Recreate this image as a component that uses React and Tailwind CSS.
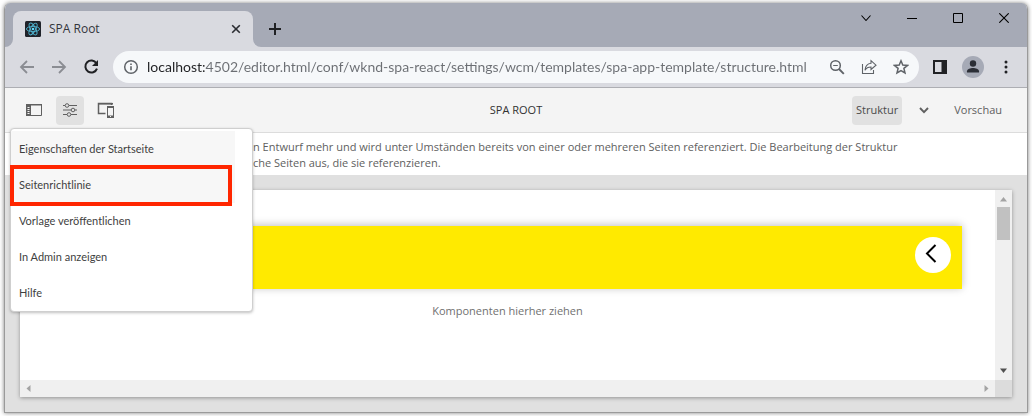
import React from "react";

function ReactLogo() {
  return (
    <svg viewBox="0 0 16 16" className="h-4 w-4 shrink-0" aria-hidden="true">
      <rect width="16" height="16" rx="1.5" fill="#20232a" />
      <g fill="none" stroke="#4fb3cf" strokeWidth="0.9">
        <ellipse cx="8" cy="8" rx="6.6" ry="2.6" />
        <ellipse cx="8" cy="8" rx="6.6" ry="2.6" transform="rotate(60 8 8)" />
        <ellipse cx="8" cy="8" rx="6.6" ry="2.6" transform="rotate(120 8 8)" />
      </g>
      <circle cx="8" cy="8" r="1.3" fill="#61dafb" />
    </svg>
  );
}

function Icon({ size = 16, children, className = "" }) {
  return (
    <svg
      width={size}
      height={size}
      viewBox={`0 0 ${size} ${size}`}
      fill="none"
      stroke="currentColor"
      className={`shrink-0 ${className}`}
      aria-hidden="true"
    >
      {children}
    </svg>
  );
}

function TitleBar() {
  return (
    <div className="flex h-11 items-end bg-[#a6aab6] pl-2">
      <div className="relative flex h-9 w-60 items-center rounded-t-lg bg-[#d9dae0] pr-3 pl-3">
        <svg className="absolute bottom-0 -left-2 h-2 w-2" viewBox="0 0 8 8" aria-hidden="true">
          <path d="M8 0v8H0a8 8 0 0 0 8-8z" fill="#d9dae0" />
        </svg>
        <svg className="absolute -right-2 bottom-0 h-2 w-2" viewBox="0 0 8 8" aria-hidden="true">
          <path d="M0 0v8h8a8 8 0 0 1-8-8z" fill="#d9dae0" />
        </svg>
        <ReactLogo />
        <span className="ml-2 text-xs text-[#33353b]">SPA Root</span>
        <button aria-label="Tab schließen" className="ml-auto text-[#2a2c31]">
          <Icon size={10}>
            <path d="M1.2 1.2l7.6 7.6M8.8 1.2L1.2 8.8" strokeWidth="1.6" />
          </Icon>
        </button>
      </div>
      <button aria-label="Neuer Tab" className="mb-3 ml-4 text-[#202124]">
        <Icon size={12}>
          <path d="M6 0v12M0 6h12" strokeWidth="2" />
        </Icon>
      </button>
      <div className="mr-[18px] mb-6 ml-auto flex gap-9 text-black">
        <button aria-label="Tabs durchsuchen">
          <Icon size={10}>
            <path d="M.5 2.5L5 7.5l4.5-5" strokeWidth="1.1" />
          </Icon>
        </button>
        <button aria-label="Minimieren">
          <Icon size={10}>
            <path d="M0 5.5h10" />
          </Icon>
        </button>
        <button aria-label="Maximieren">
          <Icon size={10}>
            <path d="M.5.5h9v9h-9z" />
          </Icon>
        </button>
        <button aria-label="Schließen">
          <Icon size={10}>
            <path d="M.3.3l9.4 9.4M9.7.3L.3 9.7" strokeWidth="1.1" />
          </Icon>
        </button>
      </div>
    </div>
  );
}

function AddressBar() {
  return (
    <div className="flex items-center border-b border-[#adaeb3] bg-[#d9dae0] pt-1 pr-3.5 pb-1 pl-3.5">
      <div className="flex gap-4">
        <button aria-label="Zurück" className="text-[#8b8d93]">
          <Icon>
            <path d="M15 8H2.5M8 2L2 8l6 6" strokeWidth="1.8" />
          </Icon>
        </button>
        <button aria-label="Vorwärts" className="text-[#8b8d93]">
          <Icon>
            <path d="M1 8h12.5M8 2l6 6-6 6" strokeWidth="1.8" />
          </Icon>
        </button>
        <button aria-label="Neu laden" className="text-[#202124]">
          <Icon>
            <path d="M13.4 4.2A6 6 0 1 0 14 9.6" strokeWidth="2" />
            <path d="M15 1v6H9z" fill="currentColor" stroke="none" />
          </Icon>
        </button>
      </div>
      <div className="ml-3.5 flex h-8 flex-1 items-center rounded-full bg-[#f6f8fa] pr-2.5 pl-2.5 text-[#5f6368]">
        <Icon>
          <circle cx="8" cy="8" r="6.3" strokeWidth="1.5" />
          <path d="M8 7.2v4M8 4.4v1.5" strokeWidth="1.6" />
        </Icon>
        <input
          aria-label="Adresse"
          defaultValue="localhost:4502/editor.html/conf/wknd-spa-react/settings/wcm/templates/spa-app-template/structure.html"
          className="ml-2 min-w-0 flex-1 bg-[linear-gradient(to_right,#202124_58px,#6b6e73_58px)] bg-clip-text font-['Lato',sans-serif] text-sm text-transparent outline-none"
        />
        <div className="flex gap-4">
          <button aria-label="Zoom">
            <Icon>
              <circle cx="6.5" cy="6.5" r="4.8" strokeWidth="1.5" />
              <path d="M4.2 6.5h4.6" strokeWidth="1.2" />
              <path d="M10 10l4.8 4.8" strokeWidth="1.9" />
            </Icon>
          </button>
          <button aria-label="Teilen">
            <Icon>
              <path d="M1.5 5v9.5h11V11" strokeWidth="1.1" />
              <path d="M10 1.7l5 4.5-5 4.3V8C7 8 5.2 9 4 11.2 4.3 7.5 6.4 4.7 10 4.3z" strokeWidth="1.1" />
            </Icon>
          </button>
          <button aria-label="Lesezeichen">
            <Icon>
              <path d="M8 1.8l1.8 4.2 4.7.4-3.6 3 1.1 4.6L8 11.6 4 14l1.1-4.6-3.6-3 4.7-.4z" strokeWidth="1.5" />
            </Icon>
          </button>
        </div>
      </div>
      <button aria-label="Seitenleiste" className="ml-3.5 text-[#202124]">
        <Icon size={14}>
          <path d="M1 1h12v12H1z" strokeWidth="2" />
          <path d="M8.5 0H14v14H8.5z" fill="currentColor" stroke="none" />
        </Icon>
      </button>
      <button aria-label="Profil" className="ml-3.5 text-[#2b2e36]">
        <Icon size={24}>
          <circle cx="12" cy="12" r="11" fill="#a6aab6" stroke="none" />
          <circle cx="12" cy="8.5" r="3.2" fill="currentColor" stroke="none" />
          <path d="M6 17.5v-1.3c0-2 3.5-3.2 6-3.2s6 1.2 6 3.2v1.3z" fill="currentColor" stroke="none" />
        </Icon>
      </button>
      <button aria-label="Menü" className="ml-3.5 text-[#202124]">
        <Icon size={14}>
          <g fill="currentColor" stroke="none">
            <circle cx="7" cy="2" r="1.5" />
            <circle cx="7" cy="7" r="1.5" />
            <circle cx="7" cy="12" r="1.5" />
          </g>
        </Icon>
      </button>
    </div>
  );
}

const menuItems = [
  "Eigenschaften der Startseite",
  "Seitenrichtlinie",
  "Vorlage veröffentlichen",
  "In Admin anzeigen",
  "Hilfe",
];

function PageMenu() {
  return (
    <div className="absolute top-10 left-[5px] z-10 w-[243px] rounded border border-[#cfcfcf] bg-white pt-0.5 font-['Lato',sans-serif] text-[11px] shadow-[0_1px_3px_rgba(0,0,0,0.25)]">
      <ul>
        {menuItems.map((item, i) => (
          <li key={item} className="relative">
            <button
              className={`flex h-9 items-center pl-2 text-left text-[#3f3f3f] ${i < 2 ? "w-56 bg-[#f7f7f7]" : "w-full"}`}
            >
              {item}
            </button>
            {i === 1 && (
              <span className="pointer-events-none absolute -top-0.5 -left-px h-[41px] w-[222px] border-4 border-[#ff2600]" />
            )}
          </li>
        ))}
      </ul>
    </div>
  );
}

function EditorBar() {
  return (
    <header className="relative grid grid-cols-[1fr_auto_1fr] items-center border-b border-[#dcdcdc] bg-[#f4f4f4] px-[15px] py-1.5 text-[11px] leading-4 text-[#606060]">
      <div className="flex items-center gap-2">
        <button aria-label="Seitenleiste umschalten" className="flex h-8 w-7 items-center justify-center">
          <Icon>
            <path d="M.5 2.5h15v11H.5z" />
            <path d="M0 2h16v1.5H0zM0 2h5v12H0z" fill="currentColor" stroke="none" />
            <path d="M1.5 5.5h2M1.5 7.5h2M1.5 9.5h2M1.5 11.5h2" stroke="#f4f4f4" />
          </Icon>
        </button>
        <button
          aria-label="Seiteninformationen"
          className="flex h-[29px] w-7 items-center justify-center rounded bg-[#e1e1e1]"
        >
          <Icon>
            <path d="M1 3.5h2m4 0h8M1 8h8m4 0h2M1 12.5h4m4 0h6" />
            <circle cx="5" cy="3.5" r="1.8" />
            <circle cx="11" cy="8" r="1.8" />
            <circle cx="7" cy="12.5" r="1.8" />
          </Icon>
        </button>
        <button aria-label="Emulator" className="flex h-7 w-7 items-center justify-center">
          <Icon size={18}>
            <path d="M8.5 12.5h-7v-10h13V4" strokeWidth="1.5" />
            <path d="M1 2h15v1.5H1z" fill="currentColor" stroke="none" />
            <path d="M10.5 5.5h6v11h-6z" />
            <path d="M10 5h7v2h-7zM10 14.5h7V17h-7z" fill="currentColor" stroke="none" />
            <path d="M13 15.5h1" stroke="#f4f4f4" />
          </Icon>
        </button>
      </div>
      <h1 className="text-[#323232]">SPA ROOT</h1>
      <div className="flex items-center justify-end">
        <button className="h-[29px] rounded bg-[#e1e1e1] px-1 text-[#4b4b4b]">Struktur</button>
        <button aria-label="Modus wählen" className="mr-6 ml-4">
          <Icon size={12}>
            <path d="M2 4l4 4.2L10 4" strokeWidth="1.9" />
          </Icon>
        </button>
        <button className="mr-2.5">Vorschau</button>
      </div>
      <PageMenu />
    </header>
  );
}

function Canvas() {
  return (
    <main className="flex flex-1 flex-col bg-[#e0e0e0] p-[15px]">
      <div className="grid flex-1 grid-cols-[1fr_17px] grid-rows-[1fr_17px] bg-white shadow-[0_1px_4px_rgba(0,0,0,0.35)]">
        <div className="px-[33px] pt-9">
          <div className="flex h-[63px] items-start justify-end bg-[#ffea00] pt-[11px] pr-[11px] shadow-[0_-1px_8px_rgba(0,0,0,0.25)]">
            <button
              aria-label="Vorheriges Element"
              className="flex h-9 w-9 items-center justify-center rounded-full bg-white text-black"
            >
              <Icon size={24}>
                <path d="M14.5 2L6 10.5l8.5 8.5" strokeWidth="2" />
              </Icon>
            </button>
          </div>
          <p className="pt-3.5 text-center text-[11px] leading-4 text-[#707070]">Komponenten hierher ziehen</p>
        </div>
        <div className="flex flex-col items-center bg-[#f0f0f0] pt-1.5 pb-1.5">
          <Icon size={7} className="text-[#a3a3a3]">
            <path d="M0 5.5L3.5 1 7 5.5z" fill="currentColor" stroke="none" />
          </Icon>
          <div className="mt-1 h-[33px] w-[13px] bg-[#c1c1c1]" />
          <Icon size={7} className="mt-auto text-[#505050]">
            <path d="M0 1.5h7L3.5 6z" fill="currentColor" stroke="none" />
          </Icon>
        </div>
        <div className="flex items-center justify-between bg-[#f0f0f0] px-1.5 text-[#a3a3a3]">
          <Icon size={7}>
            <path d="M4.5 0v7L.5 3.5z" fill="currentColor" stroke="none" />
          </Icon>
          <Icon size={7}>
            <path d="M2.5 0v7l4-3.5z" fill="currentColor" stroke="none" />
          </Icon>
        </div>
        <div className="bg-[#dcdcdc]" />
      </div>
    </main>
  );
}

export default function App() {
  return (
    <div className="flex min-h-screen flex-col bg-white px-1 py-[3px] font-['Open_Sans','Noto_Sans',sans-serif]">
      <div className="flex flex-1 flex-col overflow-hidden rounded-t-md border-x border-b border-[#9a9a9a] shadow-[0_0_4px_rgba(0,0,0,0.5)]">
        <TitleBar />
        <AddressBar />
        <EditorBar />
        <div className="bg-white pt-1.5 pb-1 pl-62 text-[11px] leading-4 text-[#606060]">
          <p className="whitespace-nowrap">
            n Entwurf mehr und wird unter Umständen bereits von einer oder mehreren Seiten referenziert. Die Bearbeitung der
            Struktur
          </p>
          <p>che Seiten aus, die sie referenzieren.</p>
        </div>
        <Canvas />
      </div>
    </div>
  );
}
